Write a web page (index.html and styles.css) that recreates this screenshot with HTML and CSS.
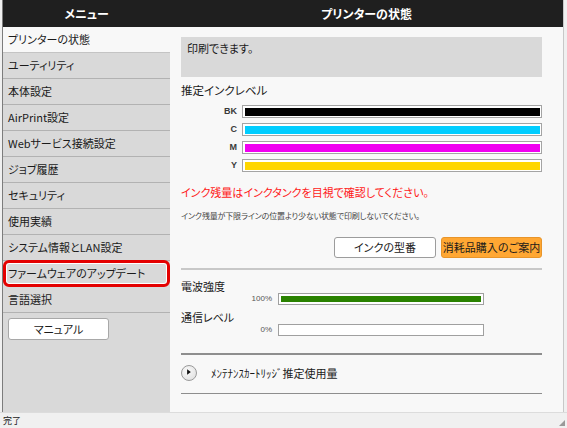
FILE: index.html
```html
<!DOCTYPE html>
<html lang="ja">
<head>
<meta charset="utf-8">
<title>プリンターの状態</title>
<link rel="stylesheet" href="styles.css">
</head>
<body>
<div class="app">
  <div class="main">
    <nav class="menu">
      <div class="col-header">メニュー</div>
      <div class="menu-item active">プリンターの状態</div>
      <div class="menu-item">ユーティリティ</div>
      <div class="menu-item">本体設定</div>
      <div class="menu-item">AirPrint設定</div>
      <div class="menu-item">Webサービス接続設定</div>
      <div class="menu-item">ジョブ履歴</div>
      <div class="menu-item">セキュリティ</div>
      <div class="menu-item">使用実績</div>
      <div class="menu-item">システム情報とLAN設定</div>
      <div class="menu-item current">ファームウェアのアップデート</div>
      <div class="menu-item">言語選択</div>
      <div class="manual-btn">マニュアル</div>
    </nav>
    <section class="content">
      <div class="col-header">プリンターの状態</div>
      <div class="content-body">
        <div class="status-box">印刷できます。</div>
        <div class="section-title">推定インクレベル</div>
        <div class="ink-list">
          <span class="ink-label">BK</span><div class="ink-bar"><div class="fill bk"></div></div>
          <span class="ink-label">C</span><div class="ink-bar"><div class="fill c"></div></div>
          <span class="ink-label">M</span><div class="ink-bar"><div class="fill m"></div></div>
          <span class="ink-label">Y</span><div class="ink-bar"><div class="fill y"></div></div>
        </div>
        <div class="warn">インク残量はインクタンクを目視で確認してください。</div>
        <div class="note">インク残量が下限ラインの位置より少ない状態で印刷しないでください。</div>
        <div class="btn-row">
          <div class="btn">インクの型番</div>
          <div class="btn orange">消耗品購入のご案内</div>
        </div>
        <div class="divider light"></div>
        <div class="sub-title first">電波強度</div>
        <div class="level-row">
          <span class="pct">100%</span><div class="level-bar"><div class="level-fill" style="width:100%"></div></div>
        </div>
        <div class="sub-title">通信レベル</div>
        <div class="level-row">
          <span class="pct">0%</span><div class="level-bar"><div class="level-fill" style="width:0%"></div></div>
        </div>
        <div class="divider dark d2"></div>
        <div class="expander">
          <span class="play">
            <svg width="16" height="16" viewBox="0 0 16 16"><path d="M6.5 5 L10.5 8 L6.5 11 Z" fill="#111"/></svg>
          </span>
          <span class="exp-text">ﾒﾝﾃﾅﾝｽｶｰﾄﾘｯｼﾞ推定使用量</span>
        </div>
        <div class="divider dark d3"></div>
      </div>
    </section>
  </div>
  <div class="statusbar"><span>完了</span><span class="grip"></span></div>
</div>
</body>
</html>
```
FILE: styles.css
```css
* { box-sizing: border-box; }
html, body { margin: 0; padding: 0; }
body {
  font-family: "Noto Sans CJK JP", "Noto Sans", sans-serif;
  font-feature-settings: "palt";
  font-size: 11px;
  color: #1a1a1a;
  background: #f0f0f0;
}
.app { width: 567px; height: 428px; display: flex; flex-direction: column; }
.main { height: 412px; display: flex; padding-left: 2px; padding-right: 3px; background: #f0f0f0; }

.col-header {
  height: 27px;
  background: #1f1f1f;
  color: #fff;
  font-weight: bold;
  font-size: 12px;
  display: flex; align-items: center; justify-content: center;
  line-height: 1;
}

.menu {
  width: 168px;
  border-left: 1px solid #7c7c7c;
  background: #d9d9d9;
  display: flex; flex-direction: column;
}
.menu-item {
  height: 26px;
  border-bottom: 1px solid #b2b2b2;
  padding-left: 5px;
  display: flex; align-items: center;
  line-height: 1;
  white-space: nowrap;
}
.menu-item.active { background: #f8f8f8; border-bottom-color: #c4c4c4; }
.menu-item.current {
  height: 27px;
  margin-top: -1px;
  border: 3px solid #e40000;
  border-radius: 6px;
  padding-left: 2px;
  box-shadow: inset 0 0 0 1px #fff;
}
.manual-btn {
  margin: 5px 0 0 5px;
  width: 101px; height: 22px;
  background: #fff;
  border: 1px solid #a8a8a8;
  border-radius: 3px;
  display: flex; align-items: center; justify-content: center;
  line-height: 1;
}

.content {
  flex: 1;
  background: #f8f8f8;
  border-right: 1px solid #c8c8c8;
}
.content-body { padding: 10px 21px 0 11px; }
.status-box {
  height: 40px;
  background: #d9d9d9;
  padding: 4px 6px;
  line-height: 14px;
}
.section-title { margin-top: 6px; line-height: 14px; font-size: 11.5px; }
.ink-list {
  margin-top: 8px;
  display: grid;
  grid-template-columns: 56px 300px;
  column-gap: 5px;
  row-gap: 5px;
  align-items: center;
}
.ink-label {
  font-family: "Liberation Sans", Arial, sans-serif;
  font-size: 9px;
  font-weight: bold;
  color: #3a3a3a;
  text-align: right;
  line-height: 13px;
}
.ink-bar {
  height: 13px;
  border: 1px solid #a4a4a4;
  background: #fff;
  padding: 1.5px;
}
.fill { height: 100%; }
.fill.bk { background: #000; }
.fill.c { background: #00cdff; }
.fill.m { background: #f000f0; }
.fill.y { background: #ffd600; }
.warn { margin-top: 13px; color: #ff1a1a; line-height: 14px; }
.note { margin-top: 11px; font-size: 8px; color: #444; line-height: 12px; white-space: nowrap; letter-spacing: -0.15px; }
.btn-row { margin-top: 15px; display: flex; justify-content: flex-end; gap: 5px; }
.btn {
  width: 102px; height: 21px;
  background: #fff;
  border: 1px solid #9c9c9c;
  border-radius: 3px;
  display: flex; align-items: center; justify-content: center;
  line-height: 1;
}
.btn.orange { width: 101px; background: #ffa733; border-color: #e8952a; }
.divider { height: 2px; }
.divider.light { margin-top: 10px; background: #c8c8c8; }
.divider.dark { background: #8e8e8e; height: 1.5px; }
.divider.d2 { margin-top: 17px; }
.divider.d3 { margin-top: 12px; }
.sub-title { line-height: 14px; margin-top: 5px; font-size: 11px; }
.sub-title.first { margin-top: 9px; }
.level-row {
  display: grid;
  grid-template-columns: 91px 206px;
  column-gap: 6px;
  align-items: center;
}
.pct {
  font-family: "Liberation Sans", Arial, sans-serif;
  font-size: 8px;
  color: #555;
  text-align: right;
  line-height: 12px;
}
.level-bar {
  height: 12px;
  border: 1px solid #a0a0a0;
  background: #fff;
  padding: 2px;
}
.level-fill { height: 100%; background: #2a8200; }
.expander { margin-top: 10px; height: 16px; display: flex; align-items: center; gap: 14px; }
.play {
  width: 16px; height: 16px;
  border-radius: 50%;
  border: 1px solid #9a9a9a;
  background: radial-gradient(circle at 40% 35%, #fafafa, #dcdcdc);
  display: flex; align-items: center; justify-content: center;
}
.play svg { display: block; margin-left: -1px; margin-top: -1px; }
.exp-text { line-height: 14px; }

.statusbar {
  height: 16px;
  background: #f0f0f0;
  border-top: 1px solid #dcdcdc;
  padding-left: 3px;
  font-size: 9px;
  line-height: 15px;
  display: flex; justify-content: space-between; align-items: center;
}
.grip {
  width: 6px; height: 6px; margin-right: 2px;
  background-image: radial-gradient(circle, #999 0.8px, transparent 1px);
  background-size: 2px 2px;
  clip-path: polygon(100% 0, 100% 100%, 0 100%);
  align-self: flex-end; margin-bottom: 2px;
}
```
